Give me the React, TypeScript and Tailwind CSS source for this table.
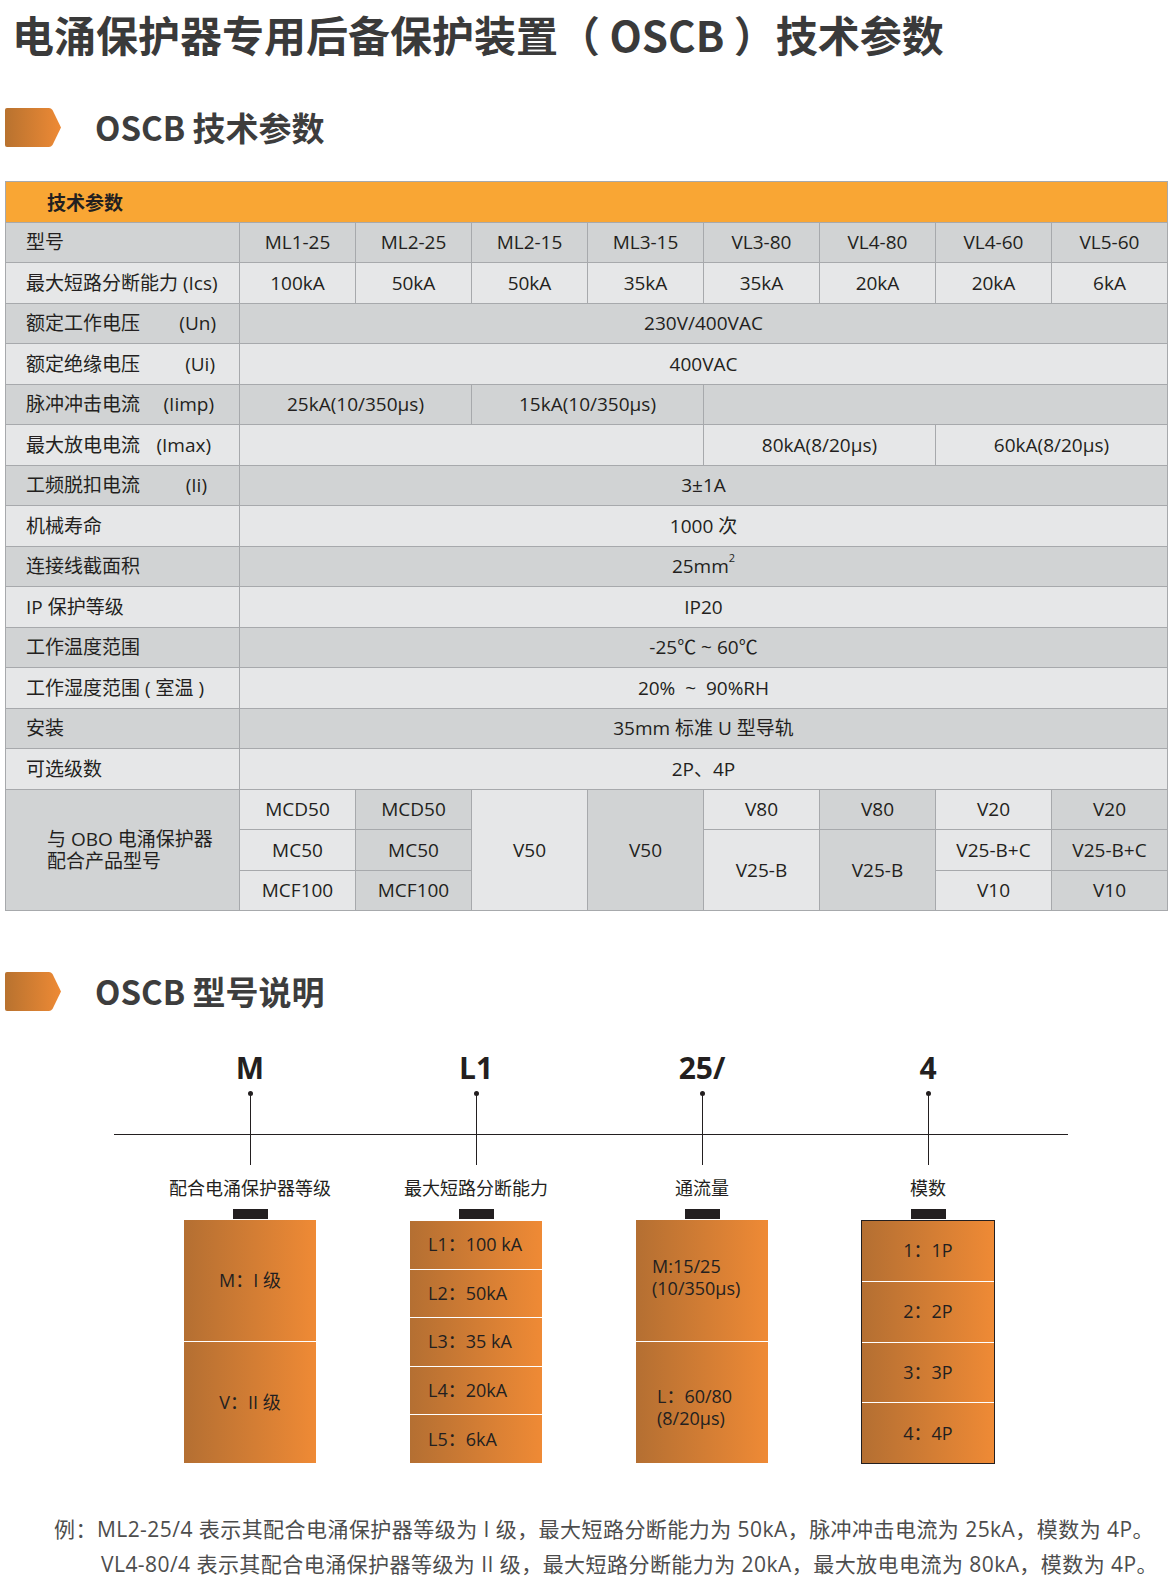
import React from 'react'

const dark = 'bg-[#d1d3d4]'
const light = 'bg-[#e6e7e8]'
const grad = 'bg-gradient-to-r from-[#b46f32] to-[#ef8a35]'

const models = ['ML1-25', 'ML2-25', 'ML2-15', 'ML3-15', 'VL3-80', 'VL4-80', 'VL4-60', 'VL5-60']
const breaking = ['100kA', '50kA', '50kA', '35kA', '35kA', '20kA', '20kA', '6kA']

function SectionTitle({ id, title }: { id: string; title: string }) {
  return (
    <div className="flex items-center h-[39px] pl-[5px]">
      <svg width="56" height="39" viewBox="0 0 56 39">
        <defs>
          <linearGradient id={id} x1="0" x2="1" y1="0" y2="0">
            <stop offset="0" stopColor="#b8722f" />
            <stop offset="1" stopColor="#ee8a35" />
          </linearGradient>
        </defs>
        <path d="M2 0 H44 Q46 0 47.5 2 L56 19.5 L47.5 37 Q46 39 44 39 H2 Q0 39 0 37 V2 Q0 0 2 0 Z" fill={`url(#${id})`} />
      </svg>
      <h2 className="ml-[34px] text-[33px] font-bold text-[#3d3d3d] leading-none font-['Noto_Sans_CJK_SC',sans-serif]">
        {title}
      </h2>
    </div>
  )
}

function Cell({ children, cls = '' }: { children?: React.ReactNode; cls?: string }) {
  return <div className={`flex items-center justify-center ${cls}`}>{children}</div>
}

function Diagram() {
  const cols = [
    {
      code: 'M',
      caption: '配合电涌保护器等级',
      box: (
        <div className="w-[132px] h-[243px] flex flex-col divide-y divide-white">
          <div className={`flex-1 flex items-center justify-center ${grad}`}>M：I 级</div>
          <div className={`flex-1 flex items-center justify-center ${grad}`}>V：II 级</div>
        </div>
      ),
    },
    {
      code: 'L1',
      caption: '最大短路分断能力',
      box: (
        <div className="w-[132px] h-[242px] mt-[1px] flex flex-col divide-y divide-white">
          {['L1：100 kA', 'L2：50kA', 'L3：35 kA', 'L4：20kA', 'L5：6kA'].map((t) => (
            <div key={t} className={`flex-1 flex items-center pl-[18px] ${grad}`}>{t}</div>
          ))}
        </div>
      ),
    },
    {
      code: '25/',
      caption: '通流量',
      box: (
        <div className="w-[132px] h-[243px] flex flex-col divide-y divide-white">
          <div className={`flex-1 flex items-center pl-[16px] pb-[8px] leading-[22px] ${grad}`}>
            <p>
              M:15/25
              <br />
              (10/350μs)
            </p>
          </div>
          <div className={`flex-1 flex items-center pl-[21px] pt-[8px] leading-[22px] ${grad}`}>
            <p>
              L：60/80
              <br />
              (8/20μs)
            </p>
          </div>
        </div>
      ),
    },
    {
      code: '4',
      caption: '模数',
      box: (
        <div className="w-[134px] h-[244px] border border-[#231f20] flex flex-col divide-y divide-white">
          {['1：1P', '2：2P', '3：3P', '4：4P'].map((t) => (
            <div key={t} className={`flex-1 flex items-center justify-center ${grad}`}>{t}</div>
          ))}
        </div>
      ),
    },
  ]

  return (
    <div className="relative mt-[39px] flex pl-[137px]">
      <div className="absolute left-[114px] top-[84px] w-[954px] h-px bg-[#231f20]" />
      {cols.map((c) => (
        <div key={c.code} className="w-[226px] flex flex-col items-center text-[#231f20]">
          <div className="text-[30px] font-bold leading-[36px]">{c.code}</div>
          <div className="mt-[5px] w-[5px] h-[5px] rounded-full bg-[#231f20]" />
          <div className="w-px h-[71px] bg-[#231f20] -mt-[2px]" />
          <div className="mt-[10px] text-[18px] leading-[24px] font-['Noto_Sans_CJK_SC',sans-serif]">{c.caption}</div>
          <div className="mt-[10px] w-[35px] h-[10px] bg-[#231f20]" />
          <div className="mt-[1px] text-[18px]">{c.box}</div>
        </div>
      ))}
    </div>
  )
}

export default function App() {
  return (
    <div className="w-[1175px] min-h-[1585px] bg-white font-['Open_Sans','Noto_Sans_CJK_SC',sans-serif] text-[#231f20]">
      <h1 className="pt-[13px] pl-[12px] text-[42px] leading-[42px] font-bold text-[#3a3a3a] font-['Noto_Sans_CJK_SC',sans-serif]">
        电涌保护器专用后备保护装置（ OSCB ）技术参数
      </h1>

      <div className="mt-[53px]">
        <SectionTitle id="sec-a" title="OSCB 技术参数" />
      </div>

      {/* Spec table */}
      <div className="ml-[5px] mt-[34px] w-[1163px] grid grid-cols-[233px_repeat(8,1fr)] auto-rows-[39.5px] gap-px p-px bg-[#a7a9ac] text-[19px] text-[#231f20]">
        <div className="col-span-9 bg-[#f9a634] flex items-center pl-[41px] font-bold font-['Noto_Sans_CJK_SC',sans-serif]">
          技术参数
        </div>

        <div className={`${dark} flex items-center pl-[20px]`}>型号</div>
        {models.map((m) => (
          <Cell key={m} cls={dark}>{m}</Cell>
        ))}
        <div className={`${light} flex items-center pl-[20px]`}>最大短路分断能力 (Ics)</div>
        {breaking.map((b, i) => (
          <Cell key={i} cls={light}>{b}</Cell>
        ))}

        <div className={`${dark} flex items-center pl-[20px] pr-[23px]`}>
          <span>额定工作电压</span><span className="ml-auto">(Un)</span>
        </div>
        <Cell cls={`${dark} col-span-8`}>230V/400VAC</Cell>

        <div className={`${light} flex items-center pl-[20px] pr-[24px]`}>
          <span>额定绝缘电压</span><span className="ml-auto">(Ui)</span>
        </div>
        <Cell cls={`${light} col-span-8`}>400VAC</Cell>

        <div className={`${dark} flex items-center pl-[20px] pr-[25px]`}>
          <span>脉冲冲击电流</span><span className="ml-auto">(Iimp)</span>
        </div>
        <Cell cls={`${dark} col-span-2`}>25kA(10/350μs)</Cell>
        <Cell cls={`${dark} col-span-2`}>15kA(10/350μs)</Cell>
        <Cell cls={`${dark} col-span-4`} />

        <div className={`${light} flex items-center pl-[20px] pr-[28px]`}>
          <span>最大放电电流</span><span className="ml-auto">(Imax)</span>
        </div>
        <Cell cls={`${light} col-span-4`} />
        <Cell cls={`${light} col-span-2`}>80kA(8/20μs)</Cell>
        <Cell cls={`${light} col-span-2`}>60kA(8/20μs)</Cell>

        <div className={`${dark} flex items-center pl-[20px] pr-[32px]`}>
          <span>工频脱扣电流</span><span className="ml-auto">(Ii)</span>
        </div>
        <Cell cls={`${dark} col-span-8`}>3±1A</Cell>

        <div className={`${light} flex items-center pl-[20px]`}>机械寿命</div>
        <Cell cls={`${light} col-span-8`}>1000 次</Cell>

        <div className={`${dark} flex items-center pl-[20px]`}>连接线截面积</div>
        <Cell cls={`${dark} col-span-8`}>
          25mm<sup className="text-[11px] -top-[8px]">2</sup>
        </Cell>

        <div className={`${light} flex items-center pl-[20px]`}>IP 保护等级</div>
        <Cell cls={`${light} col-span-8`}>IP20</Cell>

        <div className={`${dark} flex items-center pl-[20px]`}>工作温度范围</div>
        <Cell cls={`${dark} col-span-8`}>-25℃ ~ 60℃</Cell>

        <div className={`${light} flex items-center pl-[20px]`}>工作湿度范围 ( 室温 )</div>
        <Cell cls={`${light} col-span-8`}>20%&nbsp; ~ &nbsp;90%RH</Cell>

        <div className={`${dark} flex items-center pl-[20px]`}>安装</div>
        <Cell cls={`${dark} col-span-8`}>35mm 标准 U 型导轨</Cell>

        <div className={`${light} flex items-center pl-[20px]`}>可选级数</div>
        <Cell cls={`${light} col-span-8`}>2P、4P</Cell>

        {/* matching OBO products */}
        <div className={`${dark} row-span-3 flex items-center pl-[41px] leading-[22px]`}>
          <p>
            与 OBO 电涌保护器
            <br />
            配合产品型号
          </p>
        </div>
        <Cell cls={light}>MCD50</Cell>
        <Cell cls={dark}>MCD50</Cell>
        <Cell cls={`${light} row-span-3`}>V50</Cell>
        <Cell cls={`${dark} row-span-3`}>V50</Cell>
        <Cell cls={light}>V80</Cell>
        <Cell cls={dark}>V80</Cell>
        <Cell cls={light}>V20</Cell>
        <Cell cls={dark}>V20</Cell>

        <Cell cls={light}>MC50</Cell>
        <Cell cls={dark}>MC50</Cell>
        <Cell cls={`${light} row-span-2`}>V25-B</Cell>
        <Cell cls={`${dark} row-span-2`}>V25-B</Cell>
        <Cell cls={light}>V25-B+C</Cell>
        <Cell cls={dark}>V25-B+C</Cell>

        <Cell cls={light}>MCF100</Cell>
        <Cell cls={dark}>MCF100</Cell>
        <Cell cls={light}>V10</Cell>
        <Cell cls={dark}>V10</Cell>
      </div>

      <div className="mt-[61px]">
        <SectionTitle id="sec-b" title="OSCB 型号说明" />
      </div>

      <Diagram />

      {/* Example notes */}
      <div className="mt-[48px] text-[21px] leading-[35px] text-[#4d4d4d] tracking-[0.45px]">
        <p className="pl-[54px]">
          例：ML2-25/4 表示其配合电涌保护器等级为 I 级，最大短路分断能力为 50kA，脉冲冲击电流为 25kA，模数为 4P。
        </p>
        <p className="pl-[101px]">
          VL4-80/4 表示其配合电涌保护器等级为 II 级，最大短路分断能力为 20kA，最大放电电流为 80kA，模数为 4P。
        </p>
      </div>
    </div>
  )
}
